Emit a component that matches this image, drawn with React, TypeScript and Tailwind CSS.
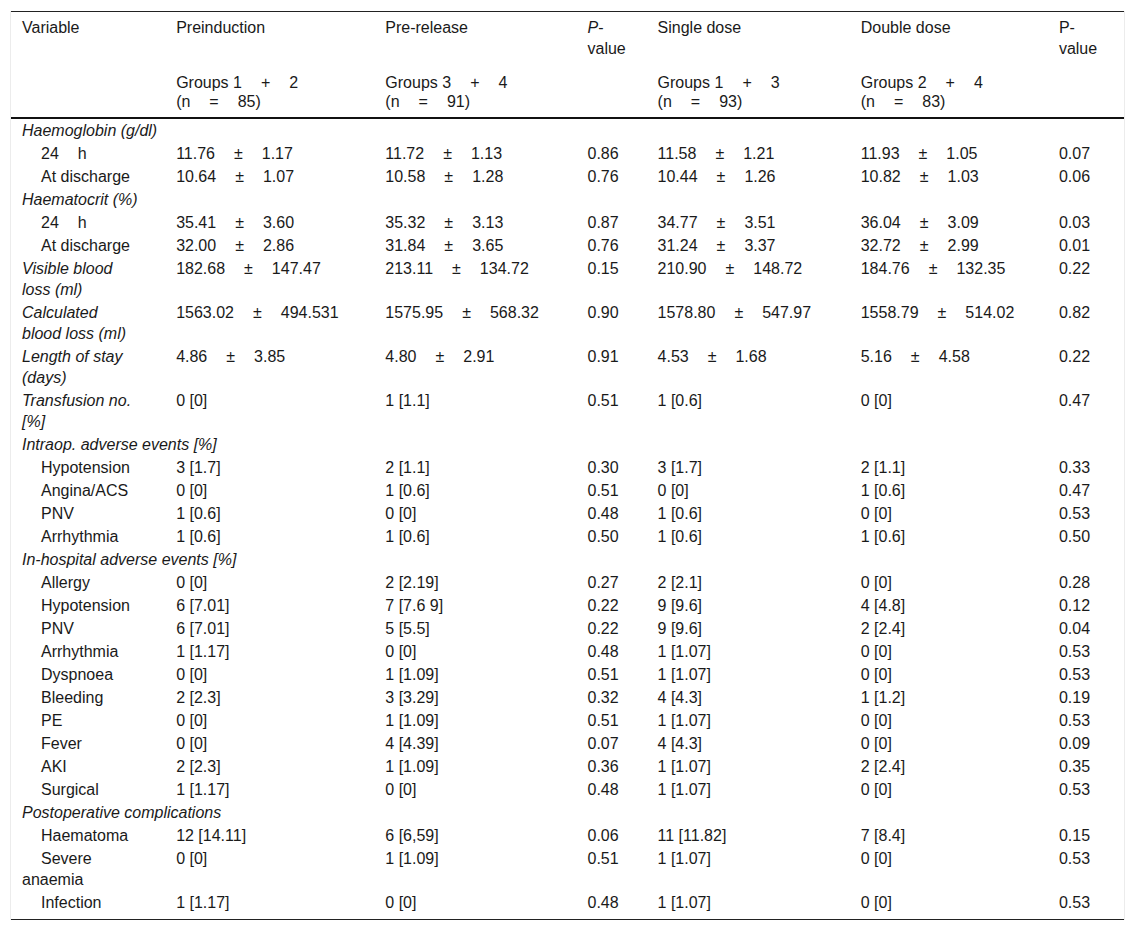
import React from "react";

// wide gap used by the source table between numbers and operators
const G = () => <span className="inline-block w-[19px]" />;

function spaced(...parts: string[]) {
  return (
    <>
      {parts.map((p, i) => (
        <React.Fragment key={i}>
          {i > 0 && <G />}
          {p}
        </React.Fragment>
      ))}
    </>
  );
}

const pm = (a: string, b: string) => spaced(a, "±", b);

type Row =
  | { kind: "section"; label: string }
  | { kind: "data"; label: React.ReactNode; sub?: boolean; italic?: boolean; cells: React.ReactNode[] };

const rows: Row[] = [
  { kind: "section", label: "Haemoglobin (g/dl)" },
  { kind: "data", sub: true, label: spaced("24", "h"), cells: [pm("11.76", "1.17"), pm("11.72", "1.13"), "0.86", pm("11.58", "1.21"), pm("11.93", "1.05"), "0.07"] },
  { kind: "data", sub: true, label: "At discharge", cells: [pm("10.64", "1.07"), pm("10.58", "1.28"), "0.76", pm("10.44", "1.26"), pm("10.82", "1.03"), "0.06"] },
  { kind: "section", label: "Haematocrit (%)" },
  { kind: "data", sub: true, label: spaced("24", "h"), cells: [pm("35.41", "3.60"), pm("35.32", "3.13"), "0.87", pm("34.77", "3.51"), pm("36.04", "3.09"), "0.03"] },
  { kind: "data", sub: true, label: "At discharge", cells: [pm("32.00", "2.86"), pm("31.84", "3.65"), "0.76", pm("31.24", "3.37"), pm("32.72", "2.99"), "0.01"] },
  {
    kind: "data",
    italic: true,
    label: (
      <>
        Visible blood
        <br />
        loss (ml)
      </>
    ),
    cells: [pm("182.68", "147.47"), pm("213.11", "134.72"), "0.15", pm("210.90", "148.72"), pm("184.76", "132.35"), "0.22"],
  },
  {
    kind: "data",
    italic: true,
    label: (
      <>
        Calculated
        <br />
        blood loss (ml)
      </>
    ),
    cells: [pm("1563.02", "494.531"), pm("1575.95", "568.32"), "0.90", pm("1578.80", "547.97"), pm("1558.79", "514.02"), "0.82"],
  },
  {
    kind: "data",
    italic: true,
    label: (
      <>
        Length of stay
        <br />
        (days)
      </>
    ),
    cells: [pm("4.86", "3.85"), pm("4.80", "2.91"), "0.91", pm("4.53", "1.68"), pm("5.16", "4.58"), "0.22"],
  },
  {
    kind: "data",
    italic: true,
    label: (
      <>
        Transfusion no.
        <br />
        [%]
      </>
    ),
    cells: ["0 [0]", "1 [1.1]", "0.51", "1 [0.6]", "0 [0]", "0.47"],
  },
  { kind: "section", label: "Intraop. adverse events [%]" },
  { kind: "data", sub: true, label: "Hypotension", cells: ["3 [1.7]", "2 [1.1]", "0.30", "3 [1.7]", "2 [1.1]", "0.33"] },
  { kind: "data", sub: true, label: "Angina/ACS", cells: ["0 [0]", "1 [0.6]", "0.51", "0 [0]", "1 [0.6]", "0.47"] },
  { kind: "data", sub: true, label: "PNV", cells: ["1 [0.6]", "0 [0]", "0.48", "1 [0.6]", "0 [0]", "0.53"] },
  { kind: "data", sub: true, label: "Arrhythmia", cells: ["1 [0.6]", "1 [0.6]", "0.50", "1 [0.6]", "1 [0.6]", "0.50"] },
  { kind: "section", label: "In-hospital adverse events [%]" },
  { kind: "data", sub: true, label: "Allergy", cells: ["0 [0]", "2 [2.19]", "0.27", "2 [2.1]", "0 [0]", "0.28"] },
  { kind: "data", sub: true, label: "Hypotension", cells: ["6 [7.01]", "7 [7.6 9]", "0.22", "9 [9.6]", "4 [4.8]", "0.12"] },
  { kind: "data", sub: true, label: "PNV", cells: ["6 [7.01]", "5 [5.5]", "0.22", "9 [9.6]", "2 [2.4]", "0.04"] },
  { kind: "data", sub: true, label: "Arrhythmia", cells: ["1 [1.17]", "0 [0]", "0.48", "1 [1.07]", "0 [0]", "0.53"] },
  { kind: "data", sub: true, label: "Dyspnoea", cells: ["0 [0]", "1 [1.09]", "0.51", "1 [1.07]", "0 [0]", "0.53"] },
  { kind: "data", sub: true, label: "Bleeding", cells: ["2 [2.3]", "3 [3.29]", "0.32", "4 [4.3]", "1 [1.2]", "0.19"] },
  { kind: "data", sub: true, label: "PE", cells: ["0 [0]", "1 [1.09]", "0.51", "1 [1.07]", "0 [0]", "0.53"] },
  { kind: "data", sub: true, label: "Fever", cells: ["0 [0]", "4 [4.39]", "0.07", "4 [4.3]", "0 [0]", "0.09"] },
  { kind: "data", sub: true, label: "AKI", cells: ["2 [2.3]", "1 [1.09]", "0.36", "1 [1.07]", "2 [2.4]", "0.35"] },
  { kind: "data", sub: true, label: "Surgical", cells: ["1 [1.17]", "0 [0]", "0.48", "1 [1.07]", "0 [0]", "0.53"] },
  { kind: "section", label: "Postoperative complications" },
  { kind: "data", sub: true, label: "Haematoma", cells: ["12 [14.11]", "6 [6,59]", "0.06", "11 [11.82]", "7 [8.4]", "0.15"] },
  {
    kind: "data",
    sub: true,
    label: (
      <>
        Severe
        <br />
        anaemia
      </>
    ),
    cells: ["0 [0]", "1 [1.09]", "0.51", "1 [1.07]", "0 [0]", "0.53"],
  },
  { kind: "data", sub: true, label: "Infection", cells: ["1 [1.17]", "0 [0]", "0.48", "1 [1.07]", "0 [0]", "0.53"] },
];

const th = "pl-[11px] pr-[4px] text-left align-top font-normal";
const th1 = `${th} py-[5px] leading-[21px]`;
const th2 = `${th} pt-[9px] pb-[6px] leading-[19px]`;
const td = "pl-[11px] pr-[4px] py-[1px] align-top leading-[21px]";

function GroupHead({ a, b, n }: { a: string; b: string; n: string }) {
  return (
    <th className={th2}>
      Groups {a}
      <G />+<G />
      {b}
      <br />
      (n<G />=<G />
      {n})
    </th>
  );
}

export default function App() {
  return (
    <div
      className="bg-white px-[10px] pt-[11px] pb-[10px] text-[16px] text-[#1a1a1a]"
      style={{ fontFamily: '"Liberation Sans", Arial, sans-serif' }}
    >
      <div className="border-x border-[#ececec]">
        <table className="w-full table-fixed border-collapse">
          <colgroup>
            <col className="w-[154px]" />
            <col className="w-[209px]" />
            <col className="w-[202px]" />
            <col className="w-[70px]" />
            <col className="w-[203px]" />
            <col className="w-[198px]" />
            <col className="w-[76px]" />
          </colgroup>
          <thead>
            <tr className="border-t border-[#222]">
              <th className={th1}>Variable</th>
              <th className={th1}>Preinduction</th>
              <th className={th1}>Pre-release</th>
              <th className={th1}>
                <i>P</i>-
                <br />
                value
              </th>
              <th className={th1}>Single dose</th>
              <th className={th1}>Double dose</th>
              <th className={th1}>
                P-
                <br />
                value
              </th>
            </tr>
            <tr className="border-b-2 border-[#111]">
              <th className={th2}></th>
              <GroupHead a="1" b="2" n="85" />
              <GroupHead a="3" b="4" n="91" />
              <th className={th2}></th>
              <GroupHead a="1" b="3" n="93" />
              <GroupHead a="2" b="4" n="83" />
              <th className={th2}></th>
            </tr>
          </thead>
          <tbody className="border-b border-[#222]">
            {rows.map((r, i) => {
              const last = i === rows.length - 1 ? "pb-[6px]" : "";
              return r.kind === "section" ? (
                <tr key={i}>
                  <td colSpan={7} className={`${td} italic`}>
                    {r.label}
                  </td>
                </tr>
              ) : (
                <tr key={i}>
                  <td className={`${td} ${last} ${r.sub ? "indent-[19px]" : ""} ${r.italic ? "italic" : ""}`}>
                    {r.label}
                  </td>
                  {r.cells.map((c, j) => (
                    <td key={j} className={`${td} ${last} whitespace-nowrap`}>
                      {c}
                    </td>
                  ))}
                </tr>
              );
            })}
          </tbody>
        </table>
      </div>
    </div>
  );
}
